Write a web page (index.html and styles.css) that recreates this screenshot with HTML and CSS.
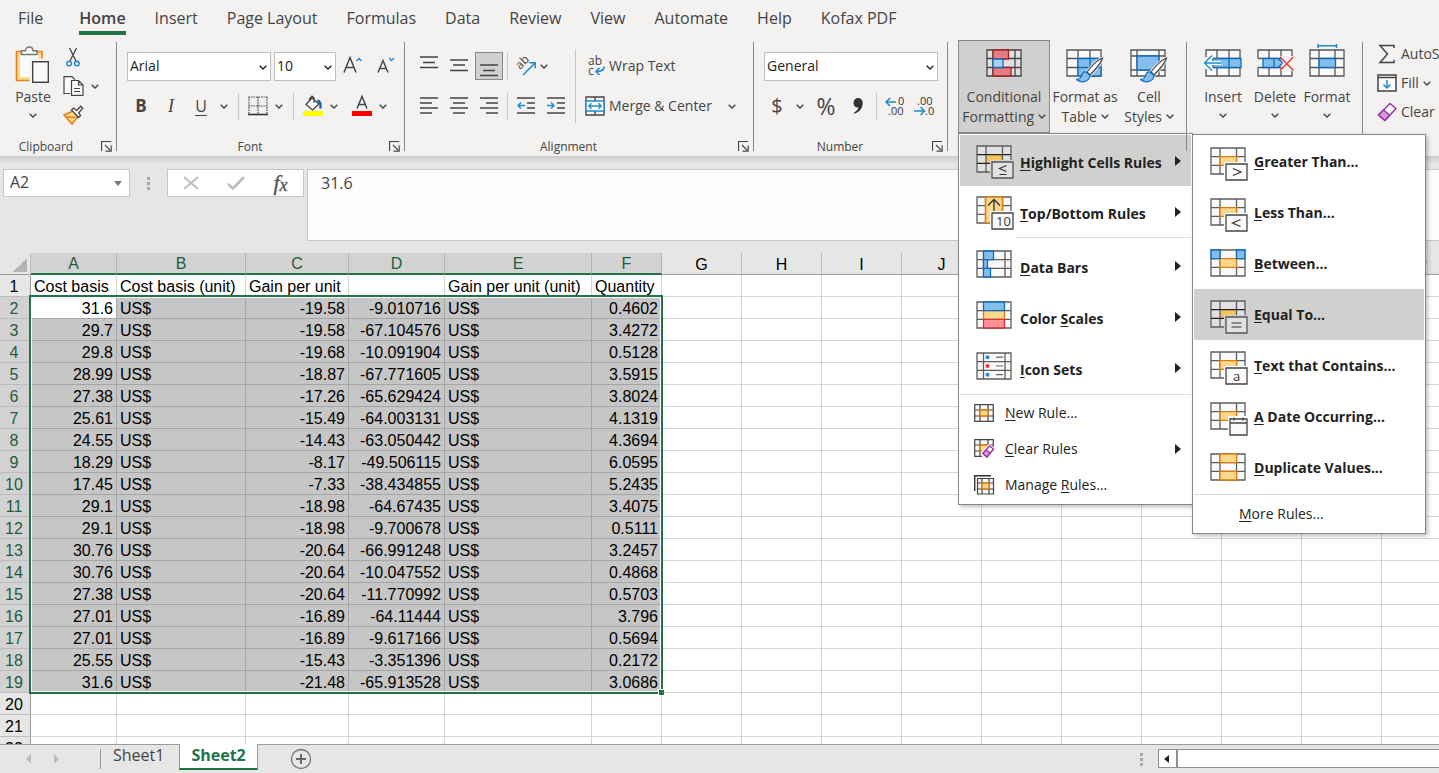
FILE: index.html
```html
<!DOCTYPE html>
<html lang="en">
<head>
<meta charset="utf-8">
<title>Workbook</title>
<link rel="stylesheet" href="styles.css">
</head>
<body>
<svg class="sprite" aria-hidden="true">
  <symbol id="chev" viewBox="0 0 8 5"><path d="M.7.7 4 4 7.3.7" fill="none" stroke="currentColor" stroke-width="1.4"/></symbol>
  <symbol id="launch" viewBox="0 0 11 11"><path d="M.5 10V.5H10M4 4l5 5M10.200 4.500v5.700H4.500" fill="none" stroke="#444" stroke-width="1.2"/></symbol>
  <symbol id="grid" viewBox="0 0 38 34">
    <path d="M1 1h34v26H1z" fill="#fafafa"/>
    <path d="M1 1h34v26H1zM10 1v26M26.500 1v26M1 9.700h34M1 18.300h34" fill="none" stroke="#605e5c" stroke-width="1.300"/>
  </symbol>
  <symbol id="gridmid" viewBox="0 0 38 34">
    <use href="#grid"/><path d="M10 9.700h16.500v8.600H10z" fill="#f9d98c" stroke="#e07b13" stroke-width="1.300"/>
  </symbol>
  <symbol id="griddark" viewBox="0 0 38 34">
    <path d="M1 1h34v26H1z" fill="#e1e1e1"/>
    <path d="M10 9.700h16.500v8.600H10z" fill="#f5c55a"/>
    <path d="M1 1h34v26H1zM10 1v26M26.500 1v26" fill="none" stroke="#605e5c" stroke-width="1.300"/><path d="M1 9.700h34M1 18.300h34" stroke="#222" stroke-width="1.200"/>
  </symbol>
  <symbol id="badge" viewBox="0 0 38 34"><path d="M14 15h24v19H14z" fill="#fff"/><path d="M16 17h21v16H16z" fill="#fafafa" stroke="#444" stroke-width="1.300"/></symbol>
  <symbol id="badgedark" viewBox="0 0 38 34"><path d="M14 15h24v19H14z" fill="#d2d0ce"/><path d="M16 17h21v16H16z" fill="#e1e1e1" stroke="#555" stroke-width="1.300"/></symbol>
  <symbol id="small" viewBox="0 0 20 18"><path d="M.7.7h18.600v16.600H.7zM6 .7v16.600M14 .7v16.600M.7 6h18.600M.7 12h18.600" fill="#fafafa" stroke="#444" stroke-width="1.200"/><path d="M6 6h8v6H6z" fill="#f9d98c" stroke="#e07b13" stroke-width="1.300"/></symbol>
  <symbol id="brush" viewBox="0 0 28 26">
    <path d="M26.500 1C20 4 14 11 11 15l3 3C18 14 25 7 26.500 1z" fill="#fff" stroke="#f3f2f1" stroke-width="3"/>
    <path d="M26.500 1C20 4 14 11 11 15l3 3C18 14 25 7 26.500 1z" fill="#fff" stroke="#444" stroke-width="1.200"/>
    <path d="M10 15c-3-.5-4 1.500-4.500 4-.4 2-2 3-5 3.500C4 26 13 26 14 18.500z" fill="#83beec" stroke="#0f6cbd" stroke-width="1.200"/>
  </symbol>
</svg>

<nav class="tabs">
  <a class="tab file" href="#">File</a><a class="tab on" href="#">Home</a><a class="tab" href="#">Insert</a><a class="tab" href="#">Page Layout</a><a class="tab" href="#">Formulas</a><a class="tab" href="#">Data</a><a class="tab" href="#">Review</a><a class="tab" href="#">View</a><a class="tab" href="#">Automate</a><a class="tab" href="#">Help</a><a class="tab" href="#">Kofax PDF</a>
</nav>

<div class="ribbon">
  <section class="group clipboard">
    <div class="body">
      <button class="big paste">
        <svg width="36" height="38" viewBox="0 0 36 38"><path d="M1.500 5.500h25.500v29H1.500z" fill="#f9d98c" stroke="#e8811a" stroke-width="1.600"/><path d="M5 9h18.500v22H5z" fill="#fafafa"/><path d="M6.500 8.500V4.700h4c0-2 1.500-3.700 3.700-3.700s3.700 1.700 3.700 3.700h4v3.800z" fill="#fafafa" stroke="#777" stroke-width="1.400"/><path d="M16.500 14.500h18v22h-18z" fill="#fafafa" stroke="#f3f2f1" stroke-width="4"/><path d="M17.700 15.700h15.600v20.600H17.700z" fill="#fafafa" stroke="#444" stroke-width="1.400"/></svg>
        <span>Paste</span><svg class="chev"><use href="#chev"/></svg>
      </button>
      <div class="clip-tools">
        <button class="ico" aria-label="Cut"><svg width="14" height="20" viewBox="0 0 14 20"><path d="M3.500 1l6.500 13M10.500 1L4 14" fill="none" stroke="#444" stroke-width="1.300"/><circle cx="3.200" cy="16.500" r="2.300" fill="none" stroke="#1e8bcd" stroke-width="1.500"/><circle cx="10.800" cy="16.500" r="2.300" fill="none" stroke="#1e8bcd" stroke-width="1.500"/></svg></button>
        <div class="row"><button class="ico" aria-label="Copy"><svg width="21" height="20" viewBox="0 0 21 20"><path d="M7 17.500H1V.7h8l3 3" fill="#fafafa" stroke="#444" stroke-width="1.200"/><path d="M8.500 4.500h7l4.500 4.500v10.300H8.500zM15.500 4.500V9H20M11 12.500h6M11 15.500h6" fill="#fafafa" stroke="#444" stroke-width="1.200"/></svg></button><button class="drop" aria-label="Copy options"><svg class="chev"><use href="#chev"/></svg></button></div>
        <button class="ico" aria-label="Format Painter"><svg width="21" height="20" viewBox="0 0 21 20"><path d="M1 10l9-4 5 5.500-6 7.500z" fill="#f9d98c" stroke="#e8811a" stroke-width="1.500"/><path d="M3.500 12l10 .5" stroke="#e8811a" stroke-width="1.300"/><path d="M8.500 5l2-2 3.200 2.500 4-4.300 2 2-4 4.500 1.800 3-2 1.800z" fill="#fff" stroke="#444" stroke-width="1.300"/></svg></button>
      </div>
    </div>
    <div class="foot"><span>Clipboard</span><button class="launcher" aria-label="Clipboard settings"><svg><use href="#launch"/></svg></button></div>
  </section>

  <section class="group font">
    <div class="body col">
      <div class="row one">
        <label class="combo family"><select aria-label="Font"><option>Arial</option></select><svg class="chev"><use href="#chev"/></svg></label>
        <label class="combo size"><select aria-label="Font size"><option>10</option></select><svg class="chev"><use href="#chev"/></svg></label>
        <button class="ico grow" aria-label="Increase font size"><svg width="20" height="20" viewBox="0 0 20 20"><path d="M1 16.500L7 1.500l6 15M3.200 11.500h7.600" fill="none" stroke="#444" stroke-width="1.500"/><path d="M13.500 5L16 2.500 18.500 5" fill="none" stroke="#1e8bcd" stroke-width="1.400"/></svg></button>
        <button class="ico shrink" aria-label="Decrease font size"><svg width="18" height="20" viewBox="0 0 18 20"><path d="M1 16.500L6 4.500l5 12M2.800 12.500h6.400" fill="none" stroke="#444" stroke-width="1.400"/><path d="M12 2l2.500 2.500L17 2" fill="none" stroke="#1e8bcd" stroke-width="1.400"/></svg></button>
      </div>
      <div class="row two">
        <button class="ico w30 b">B</button><button class="ico w30 i">I</button><button class="ico w30 u">U</button><button class="drop" aria-label="Underline options"><svg class="chev"><use href="#chev"/></svg></button>
        <i class="sep m6"></i>
        <button class="ico w26" aria-label="Borders"><svg width="20" height="20" viewBox="0 0 20 20"><path d="M.5 1h19M.5 10h19M1 1v17M10 1v17M19 1v17" fill="none" stroke="#444" stroke-width="1.200" stroke-dasharray="1.500 1"/><path d="M0 18.500h20" stroke="#333" stroke-width="1.600"/></svg></button><button class="drop" aria-label="Border options"><svg class="chev"><use href="#chev"/></svg></button>
        <i class="sep m6"></i>
        <button class="ico w26" aria-label="Fill color"><svg width="20" height="22" viewBox="0 0 20 22"><path d="M9 3l7 6-6.500 6L3 9.500 9 3zM6 4.500l3-3.300 2 1.500v5" fill="#fafafa" stroke="#444" stroke-width="1.300"/><path d="M14.500 5.500c3 1 3.500 4 2.800 8" fill="none" stroke="#1b5fa8" stroke-width="2.400"/><path d="M0 16h20v5H0z" fill="#ff0"/></svg></button><button class="drop" aria-label="Fill options"><svg class="chev"><use href="#chev"/></svg></button>
        <button class="ico w26 ml7" aria-label="Font color"><svg width="20" height="22" viewBox="0 0 20 22"><path d="M5 13.500L10 1.500l5 12M6.700 9.500h6.600" fill="none" stroke="#444" stroke-width="1.500"/><path d="M0 16h20v5H0z" fill="red"/></svg></button><button class="drop" aria-label="Font color options"><svg class="chev"><use href="#chev"/></svg></button>
      </div>
    </div>
    <div class="foot"><span>Font</span><button class="launcher" aria-label="Font settings"><svg><use href="#launch"/></svg></button></div>
  </section>

  <section class="group align">
    <div class="body">
      <div class="col">
        <div class="row one g2">
          <button class="ico w28" aria-label="Top align"><svg class="ln"><path d="M0 1h18M3 6.500h12M0 11.500h18"/></svg></button>
          <button class="ico w28" aria-label="Middle align"><svg class="ln"><path d="M0 4h18M3 9h12M0 14.500h18"/></svg></button>
          <button class="ico w28 pressed" aria-label="Bottom align"><svg class="ln"><path d="M0 9h18M3 14.500h12M0 19.500h18"/></svg></button>
          <i class="sep m2"></i>
          <button class="ico w28" aria-label="Orientation"><svg width="20" height="20" viewBox="0 0 20 20"><text x="0" y="0" class="abtxt" transform="translate(4 14) rotate(-45)">ab</text><path d="M7 19L18.500 7.500M13.500 6.800h5.700v5.500" fill="none" stroke="#1e8bcd" stroke-width="1.500"/></svg></button><button class="drop narrow" aria-label="Orientation options"><svg class="chev"><use href="#chev"/></svg></button>
        </div>
        <div class="row two g2">
          <button class="ico w28" aria-label="Align left"><svg class="ln"><path d="M0 2h18M0 7h12M0 12h18M0 17h12"/></svg></button>
          <button class="ico w28" aria-label="Center"><svg class="ln"><path d="M0 2h18M3 7h12M0 12h18M3 17h12"/></svg></button>
          <button class="ico w28" aria-label="Align right"><svg class="ln"><path d="M0 2h18M6 7h12M0 12h18M6 17h12"/></svg></button>
          <i class="sep m2"></i>
          <button class="ico w28" aria-label="Decrease indent"><svg class="ln"><path d="M0 2h18M10 7h8M10 12h8M0 17h18"/><path class="bl" d="M1 9.500h7M4 6.500l-3 3 3 3"/></svg></button>
          <button class="ico w28" aria-label="Increase indent"><svg class="ln"><path d="M0 2h18M10 7h8M10 12h8M0 17h18"/><path class="bl" d="M0 9.500h7M4 6.500l3 3-3 3"/></svg></button>
        </div>
      </div>
      <i class="sep tall"></i>
      <div class="col wrapcol">
        <div class="row one"><button class="text"><svg width="20" height="20" viewBox="0 0 20 20"><text x="3" y="9" class="abtxt">ab</text><text x="3" y="19" class="abtxt">c</text><path d="M19.200 10.500c0 4-3 5-8 5M14.500 12l-3.500 3.500 3.500 3.500" fill="none" stroke="#1e8bcd" stroke-width="1.700"/></svg>Wrap Text</button></div>
        <div class="row two"><button class="text"><svg width="20" height="20" viewBox="0 0 20 20"><path d="M1 1h18v18H1zM10 1v18" fill="#fafafa" stroke="#444" stroke-width="1.400"/><path d="M1 5h18v10H1z" fill="#fff" stroke="#1e8bcd" stroke-width="1.400"/><path d="M4 10h12M6.500 7.300L3.800 10l2.700 2.700M13.500 7.300l2.700 2.700-2.700 2.700" fill="none" stroke="#1e8bcd" stroke-width="1.400"/></svg>Merge &amp; Center</button><button class="drop ml12" aria-label="Merge options"><svg class="chev"><use href="#chev"/></svg></button></div>
      </div>
    </div>
    <div class="foot"><span>Alignment</span><button class="launcher" aria-label="Alignment settings"><svg><use href="#launch"/></svg></button></div>
  </section>

  <section class="group number">
    <div class="body col">
      <div class="row one"><label class="combo format"><select aria-label="Number format"><option>General</option></select><svg class="chev"><use href="#chev"/></svg></label></div>
      <div class="row two">
        <button class="ico w26 sym">$</button><button class="drop ml2" aria-label="Currency options"><svg class="chev"><use href="#chev"/></svg></button>
        <button class="ico w36 sym pct">%</button>
        <button class="ico w28" aria-label="Comma style"><svg width="12" height="18" viewBox="0 0 12 18"><path d="M6 1c3 0 4.700 2 4.700 5.200C10.700 11 7.500 15 2.500 16.700l-.5-1.200c2.500-1.300 4-3 4.300-5C3.500 11 1.500 8.700 1.500 6 1.500 3 3.400 1 6 1z" fill="#333"/></svg></button>
        <i class="sep m4"></i>
        <button class="ico w28" aria-label="Increase decimal"><svg width="20" height="20" viewBox="0 0 20 20"><text x="13" y="9" class="dec">0</text><text x="3" y="19" class="dec">.00</text><path d="M1 6h10M5 2L1 6l4 4" fill="none" stroke="#1e8bcd" stroke-width="1.500"/></svg></button>
        <button class="ico w30" aria-label="Decrease decimal"><svg width="20" height="20" viewBox="0 0 20 20"><text x="3" y="9" class="dec">.00</text><text x="11" y="19" class="dec">.0</text><path d="M0 15h10M6.500 11l4 4-4 4" fill="none" stroke="#1e8bcd" stroke-width="1.500"/></svg></button>
      </div>
    </div>
    <div class="foot"><span>Number</span><button class="launcher" aria-label="Number settings"><svg><use href="#launch"/></svg></button></div>
  </section>

  <section class="group styles">
    <div class="anchor">
      <button class="big cond">
        <svg width="36" height="38" viewBox="0 0 36 38"><path d="M1 5h34v26H1zM7 5v26M29 5v26M1 13.500h34M1 22.500h34" fill="#e1e1e1" stroke="#444" stroke-width="1.300"/><path d="M7 5h15.500v9H7zM7 22.500h18V31H7z" fill="#e67c80" stroke="#9c2427" stroke-width="1.300"/><path d="M7 14h10v8.500H7z" fill="#a6d1f3" stroke="#0f6cbd" stroke-width="1.300"/></svg>
        <span>Conditional<br>Formatting <svg class="chev"><use href="#chev"/></svg></span>
      </button>

      <ul class="menu main">
        <li class="anchor"><button class="item lg hot"><svg class="g"><use href="#griddark"/><use href="#badgedark"/><path d="M30.500 20.500l-7 3 7 3M23.500 29.500h7" fill="none" stroke="#333" stroke-width="1.200"/></svg><span><u>H</u>ighlight Cells Rules</span><i class="arrow"></i></button>
          <ul class="menu sub">
            <li><button class="item lg"><svg class="g"><use href="#gridmid"/><use href="#badge"/><path d="M23 21.500l8 3.500-8 3.500" fill="none" stroke="#333" stroke-width="1.200"/></svg><span><u>G</u>reater Than...</span></button></li>
            <li><button class="item lg"><svg class="g"><use href="#gridmid"/><use href="#badge"/><path d="M30.500 21.500l-8 3.500 8 3.500" fill="none" stroke="#333" stroke-width="1.200"/></svg><span><u>L</u>ess Than...</span></button></li>
            <li><button class="item lg"><svg class="g"><use href="#gridmid"/><path d="M1 1h9v8.700H1zM26.500 1H35v8.700h-8.500z" fill="#83beec" stroke="#0f6cbd" stroke-width="1.300"/></svg><span><u>B</u>etween...</span></button></li>
            <li><button class="item lg hot"><svg class="g"><use href="#griddark"/><use href="#badgedark"/><path d="M21.500 23h10M21.500 27h10" fill="none" stroke="#333" stroke-width="1.200"/></svg><span><u>E</u>qual To...</span></button></li>
            <li><button class="item lg"><svg class="g"><use href="#gridmid"/><use href="#badge"/><text x="23" y="30" class="badgetxt">a</text></svg><span><u>T</u>ext that Contains...</span></button></li>
            <li><button class="item lg"><svg class="g"><use href="#gridmid"/><path d="M18 14h20v20H18z" fill="#fff"/><path d="M20 17h17v16H20zM20 21h17M24 15.500v3M33 15.500v3" fill="#fafafa" stroke="#444" stroke-width="1.300"/></svg><span><u>A</u> Date Occurring...</span></button></li>
            <li><button class="item lg"><svg class="g"><use href="#grid"/><path d="M10 1h16.500v8.700H10zM10 18.300h16.500V27H10z" fill="#f9d98c" stroke="#e07b13" stroke-width="1.300"/></svg><span><u>D</u>uplicate Values...</span></button></li>
            <li class="rule"></li>
            <li><button class="item more"><span><u>M</u>ore Rules...</span></button></li>
          </ul>
        </li>
        <li><button class="item lg"><svg class="g"><use href="#grid"/><path d="M9.500 1h17v26h-17z" fill="#f9d98c" stroke="#e07b13" stroke-width="1.600"/><path d="M18 18V4M12 9.500L18 3.500l6 6" fill="none" stroke="#333" stroke-width="1.300"/><use href="#badge"/><text x="20" y="30" class="badgetxt">10</text></svg><span><u>T</u>op/Bottom Rules</span><i class="arrow"></i></button></li>
        <li class="rule inset"></li>
        <li><button class="item lg"><svg class="g"><path d="M1 1h34v26H1zM7.500 1v26M29 1v26M1 9.700h34M1 18.300h34" fill="#fafafa" stroke="#605e5c" stroke-width="1.300"/><path d="M7.500 1h10v8.700h-10zM7.500 9.700h4v8.600h-4zM7.500 18.300h7V27h-7z" fill="#83beec" stroke="#0f6cbd" stroke-width="1.300"/></svg><span><u>D</u>ata Bars</span><i class="arrow"></i></button></li>
        <li><button class="item lg"><svg class="g"><path d="M1 1h34v26H1zM1 9.700h34M1 18.300h34" fill="#fafafa" stroke="#605e5c" stroke-width="1.300"/><path d="M7.500 9.700h21v8.600h-21z" fill="#f9d98c" stroke="#e07b13" stroke-width="1.300"/><path d="M7.500 1h21v8.700h-21z" fill="#83beec" stroke="#0f6cbd" stroke-width="1.300"/><path d="M7.500 18.300h21V27h-21z" fill="#ff9199" stroke="#d13438" stroke-width="1.300"/></svg><span>Color <u>S</u>cales</span><i class="arrow"></i></button></li>
        <li><button class="item lg"><svg class="g"><path d="M1 1h34v26H1zM7.500 1v26M29 1v26M1 9.700h34M1 18.300h34" fill="#fafafa" stroke="#605e5c" stroke-width="1.300"/><path d="M20 5.200h7M20 14h7M20 22.700h7" stroke="#666" stroke-width="1.200"/><circle cx="11.500" cy="5.300" r="2" fill="#1e8bcd"/><circle cx="11.500" cy="14" r="2" fill="#e8393d"/><circle cx="11.500" cy="22.700" r="2" fill="#1e8bcd"/></svg><span><u>I</u>con Sets</span><i class="arrow"></i></button></li>
        <li class="rule"></li>
        <li><button class="item sm"><svg class="s"><use href="#small"/></svg><span><u>N</u>ew Rule...</span></button></li>
        <li><button class="item sm"><svg class="s tallsvg"><use href="#small" width="20" height="18"/><path d="M7 13l8-8 6 4v9H8z" fill="#fff"/><path d="M9 14.500L15.500 7l4 3-6.500 8z" fill="#fff" stroke="#9b30a8" stroke-width="1.400"/><path d="M9 14.500l3-3.500 4 3-3 4z" fill="#d9a0de" stroke="#9b30a8" stroke-width="1.300"/></svg><span><u>C</u>lear Rules</span><i class="arrow"></i></button></li>
        <li><button class="item sm"><svg class="s tallsvg"><path d="M.7 16V.7H17" fill="none" stroke="#333" stroke-width="1.400"/><path d="M3.500 3.500h16v15.500h-16zM8 3.500V19M15 3.500V19M3.500 8h16M3.500 14h16" fill="#fafafa" stroke="#444" stroke-width="1.200"/><path d="M8 8h7v6H8z" fill="#f9d98c" stroke="#e07b13" stroke-width="1.300"/></svg><span>Manage <u>R</u>ules...</span></button></li>
      </ul>
    </div>
    <button class="big fmt">
      <svg width="40" height="38" viewBox="0 0 40 38"><path d="M2 5h34v26H2zM13 5v26M25 5v26M2 13.500h34M2 22.500h34" fill="#fafafa" stroke="#555" stroke-width="1.300"/><path d="M13 13.500h23V31H13z" fill="#83beec"/><path d="M36 13.500H13V31h23v-9M25 13.500V31M13 22.500h23" fill="none" stroke="#0f6cbd" stroke-width="1.300"/><use href="#brush" x="11" y="12" width="28" height="26"/></svg>
      <span>Format as<br>Table <svg class="chev"><use href="#chev"/></svg></span>
    </button>
    <button class="big cell">
      <svg width="40" height="38" viewBox="0 0 40 38"><path d="M2 5h34v26H2zM8 5v26M30 5v26M2 11h34M2 25h34" fill="#fafafa" stroke="#555" stroke-width="1.300"/><path d="M8 11h22v14H8z" fill="#83beec" stroke="#0f6cbd" stroke-width="1.300"/><use href="#brush" x="11" y="12" width="28" height="26"/></svg>
      <span>Cell<br>Styles <svg class="chev"><use href="#chev"/></svg></span>
    </button>
  </section>

  <section class="group cells">
    <button class="big"><svg width="40" height="38" viewBox="0 0 40 38"><path d="M3 5h34v26H3zM14 5v26M26 5v26M3 13.500h34M3 22.500h34" fill="#fafafa" stroke="#555" stroke-width="1.300"/><path d="M2 12h10v12H2z" fill="#f3f2f1"/><path d="M10 13.500h28v9H10zM26 13.500v9" fill="#83beec" stroke="#0f6cbd" stroke-width="1.300"/><path d="M18 18H1.500M9 10.500L1.500 18 9 25.500" fill="none" stroke="#fff" stroke-width="4"/><path d="M18 18H1.500M9 10.500L1.500 18 9 25.500" fill="none" stroke="#1e8bcd" stroke-width="1.500"/></svg><span>Insert</span><svg class="chev"><use href="#chev"/></svg></button>
    <button class="big"><svg width="40" height="38" viewBox="0 0 40 38"><path d="M3 5h34v26H3zM14 5v26M26 5v26" fill="#fafafa" stroke="#555" stroke-width="1.300"/><path d="M2 13.500h36v9H2z" fill="#f3f2f1"/><path d="M3 13.500h34M3 22.500h34" stroke="#555" stroke-width="1.300"/><path d="M8 13.500h15l5 4.500-5 4.500H8zM19 13.500v9" fill="#83beec" stroke="#0f6cbd" stroke-width="1.300"/><path d="M25 11h14v15H25l3-8z" fill="#f3f2f1"/><path d="M25 12l13.500 13.500M38.500 12L25 25.500" stroke="#e8393d" stroke-width="1.500"/></svg><span>Delete</span><svg class="chev"><use href="#chev"/></svg></button>
    <button class="big"><svg width="40" height="38" viewBox="0 0 40 38"><path d="M3 5h34v26H3zM12 5v26M28 5v26M3 13.500h34M3 22.500h34" fill="#fafafa" stroke="#555" stroke-width="1.300"/><path d="M12 13.500h16.500v9H12z" fill="#83beec" stroke="#0f6cbd" stroke-width="1.300"/><path d="M11 .7h18.500M11-1v4M29.500-1v4" stroke="#1e8bcd" stroke-width="1.500"/></svg><span>Format</span><svg class="chev"><use href="#chev"/></svg></button>
  </section>

  <section class="group editing">
    <button class="text"><svg width="20" height="20" viewBox="0 0 20 20"><path d="M17 4V1.500H3l7.500 8.500L3 18.500h14V16" fill="none" stroke="#444" stroke-width="1.500"/></svg>AutoSum</button>
    <button class="text"><svg width="20" height="20" viewBox="0 0 20 20"><path d="M1 2h18v16H1zM1 4.500h18" fill="#fafafa" stroke="#444" stroke-width="1.500"/><path d="M10 7v8M6.500 11.500L10 15l3.500-3.500" fill="none" stroke="#1e8bcd" stroke-width="1.500"/></svg>Fill <svg class="chev"><use href="#chev"/></svg></button>
    <button class="text"><svg width="20" height="20" viewBox="0 0 20 20"><path d="M1.500 13L13 1.500l6 5L8 18.500z" fill="#fafafa" stroke="#9b30a8" stroke-width="1.400"/><path d="M1.500 13L6.500 8l6 5L8 18.500z" fill="#d59adb" stroke="#9b30a8" stroke-width="1.400"/></svg>Clear</button>
  </section>
</div>

<div class="formula">
  <label class="namebox"><input value="A2" aria-label="Name box"><i class="caret"></i></label>
  <i class="dots"></i>
  <div class="fxbox">
    <button aria-label="Cancel"><svg width="16" height="14" viewBox="0 0 16 14"><path d="M1 1l14 12M15 1L1 13" stroke="#bdbdbd" stroke-width="1.800"/></svg></button>
    <button aria-label="Enter"><svg width="18" height="14" viewBox="0 0 18 14"><path d="M1 8l5 4.500L17 1" fill="none" stroke="#bdbdbd" stroke-width="2.600"/></svg></button>
    <button class="fx">f<small>x</small></button>
  </div>
  <textarea class="content" aria-label="Formula bar">31.6</textarea>
</div>

<main class="sheet">
  <table>
    <colgroup><col class="c-h"><col class="c-a"><col class="c-b"><col class="c-c"><col class="c-d"><col class="c-e"><col class="c-f"><col span="10" class="c-x"></colgroup>
    <thead><tr id="letters"></tr></thead>
    <tbody id="rows"></tbody>
  </table>
  <div class="selection"><i></i></div>
</main>

<footer class="bottom">
  <button class="nav prev" aria-label="Previous sheet"></button><button class="nav next" aria-label="Next sheet"></button>
  <i class="div"></i>
  <a class="sheettab" href="#">Sheet1</a><a class="sheettab on" href="#">Sheet2</a>
  <button class="add" aria-label="New sheet"><svg width="22" height="22" viewBox="0 0 22 22"><circle cx="11" cy="11" r="9.500" fill="none" stroke="#777" stroke-width="1.300"/><path d="M11 6v10M6 11h10" stroke="#666" stroke-width="2"/></svg></button>
  <i class="dots"></i>
  <div class="hscroll"><button aria-label="Scroll left"></button></div>
</footer>
<script src="sheet.js"></script>
</body>
</html>
```

FILE: sheet.js
```js
const letters = ["A","B","C","D","E","F","G","H","I","J","K","L","M","N","O","P"];
const data = [
  ["31.6", "-19.58", "-9.010716", "0.4602"],
  ["29.7", "-19.58", "-67.104576", "3.4272"],
  ["29.8", "-19.68", "-10.091904", "0.5128"],
  ["28.99", "-18.87", "-67.771605", "3.5915"],
  ["27.38", "-17.26", "-65.629424", "3.8024"],
  ["25.61", "-15.49", "-64.003131", "4.1319"],
  ["24.55", "-14.43", "-63.050442", "4.3694"],
  ["18.29", "-8.17", "-49.506115", "6.0595"],
  ["17.45", "-7.33", "-38.434855", "5.2435"],
  ["29.1", "-18.98", "-64.67435", "3.4075"],
  ["29.1", "-18.98", "-9.700678", "0.5111"],
  ["30.76", "-20.64", "-66.991248", "3.2457"],
  ["30.76", "-20.64", "-10.047552", "0.4868"],
  ["27.38", "-20.64", "-11.770992", "0.5703"],
  ["27.01", "-16.89", "-64.11444", "3.796"],
  ["27.01", "-16.89", "-9.617166", "0.5694"],
  ["25.55", "-15.43", "-3.351396", "0.2172"],
  ["31.6", "-21.48", "-65.913528", "3.0686"]
];
const titles = ["Cost basis", "Cost basis (unit)", "Gain per unit", "", "Gain per unit (unit)", "Quantity"];

function add(row, tag, text, cls) {
  const el = document.createElement(tag);
  el.textContent = text;
  if (cls) el.className = cls;
  row.append(el);
}

const head = document.getElementById("letters");
add(head, "th", "", "corner");
letters.forEach((l, i) => add(head, "th", l, i < 6 ? "picked" : ""));

const body = document.getElementById("rows");
for (let n = 1; n <= 22; n++) {
  const tr = document.createElement("tr");
  const d = data[n - 2];
  add(tr, "th", n, d ? "picked" : "");
  const cells = n === 1 ? titles : d ? [d[0], "US$", d[1], d[2], "US$", d[3]] : [];
  letters.forEach((l, i) => {
    const text = cells[i] || "";
    let cls = "";
    if (d && i < 6) {
      cls = n === 2 && i === 0 ? "active" : "sel";
      if (text !== "US$") cls += " num";
    }
    add(tr, "td", text, cls);
  });
  body.append(tr);
}
```

FILE: styles.css
```css
* { box-sizing: border-box; }
body { margin: 0; height: 100vh; display: flex; flex-direction: column; overflow: hidden; background: #e6e6e6; color: #444; font: 14px/20px "Open Sans", sans-serif; }
button { font: inherit; color: inherit; background: none; border: 0; padding: 0; margin: 0; }
svg { display: block; flex: none; overflow: visible; }
i { font-style: normal; flex: none; }
.sprite { position: absolute; width: 0; height: 0; }
.row { display: flex; align-items: center; }
.col { display: flex; flex-direction: column; }

.tabs { display: flex; gap: 29px; padding-left: 18px; height: 36px; background: #f3f2f1; font-size: 16px; flex: none; }
.tab { color: #444; text-decoration: none; padding-top: 8px; height: 35px; white-space: nowrap; }
.tab.file { margin-right: 7px; }
.tab.on { font-weight: 600; border-bottom: 4px solid #217346; }

.ribbon { display: flex; height: 120px; background: #f3f2f1; flex: none; position: relative; z-index: 2; }
.group { position: relative; display: flex; flex-direction: column; flex: none; }
.group::after { content: ""; position: absolute; right: 0; top: 6px; bottom: 5px; width: 1px; background: #8a8886; }
.group.editing::after { display: none; }
.clipboard { width: 117px; }
.font { width: 288px; }
.align { width: 349px; }
.number { width: 194px; }
.group.styles { width: 239px; flex-direction: row; padding-left: 10px; z-index: 1; }
.cells { width: 176px; flex-direction: row; padding-left: 10px; }
.editing { flex: 1; padding: 8px 0 0 14px; gap: 9px; }
.body { display: flex; height: 100px; }
.body.col { flex-direction: column; }
.foot { display: flex; align-items: center; height: 20px; padding: 1px 5px 0 0; font-size: 12px; }
.foot span { flex: 1; text-align: center; }
.clipboard .foot span { padding-right: 9px; }
.font .foot span, .align .foot span, .number .foot span { padding-right: 6px; }
.launcher svg { width: 11px; height: 11px; }
.chev { width: 8px; height: 5px; }
.drop { width: 16px; height: 26px; display: flex; align-items: center; justify-content: center; }
.drop.narrow { width: 12px; margin-left: -4px; }
.ico { display: flex; align-items: center; justify-content: center; height: 28px; }
.w26 { width: 26px; }
.w28 { width: 28px; }
.w30 { width: 30px; }
.w36 { width: 36px; }
.g2 { gap: 2px; }
.ml2 { margin-left: 2px; }
.ml7 { margin-left: 7px; }
.ml12 { margin-left: 12px; }
.sep { width: 1px; height: 27px; background: #c8c6c4; }
.m2 { margin: 0 2px; }
.m4 { margin: 0 4px; }
.m6 { margin: 0 6px; }
.sep.tall { height: 74px; margin: 13px 9px 0 5px; }
.one { height: 28px; margin-top: 16px; }
.two { height: 28px; margin-top: 12px; }
.pressed { background: #d2d0ce; border: 1px solid #8a8886; }
.b { font-size: 17px; font-weight: 700; }
.i { font: italic 18px "Liberation Serif", serif; }
.u { font-size: 16px; text-decoration: underline; text-underline-offset: 3px; }
.sym { font-size: 20px; }
.pct { font-size: 23px; }
.ln { width: 18px; height: 21px; fill: none; stroke: #444; stroke-width: 1.4px; }
.ln .bl { stroke: #1e8bcd; }
.abtxt { font-size: 12px; fill: #444; }
.dec { font-size: 11px; fill: #333; }
.badgetxt { font-size: 13px; fill: #333; font-weight: 400; }

.big { display: flex; flex-direction: column; align-items: center; text-align: center; padding-top: 9px; flex: none; }
.big span { margin-top: 4px; white-space: nowrap; }
.big > .chev { margin-top: 6px; }
.big span .chev { display: inline-block; vertical-align: 3px; }
.paste { margin-left: 14px; width: 38px; padding-top: 10px; }
.paste span { margin-top: 3px; }
.clip-tools { display: flex; flex-direction: column; gap: 1px; padding-top: 7px; margin-left: 11px; align-items: flex-start; }
.clip-tools > .ico { min-width: 20px; }
.clip-tools .drop { width: 18px; margin-left: 2px; }
.font .one { padding-left: 10px; gap: 3px; }
.font .grow { width: 26px; margin-left: 1px; }
.font .shrink { width: 26px; margin-left: 4px; }
.font .two { padding-left: 9px; }
.align .body { padding-left: 10px; }
.text { display: flex; align-items: center; white-space: nowrap; gap: 4px; }
.number .one { padding-left: 10px; }
.number .two { padding-left: 10px; }
.combo { position: relative; display: block; height: 29px; }
.combo select { appearance: none; width: 100%; height: 100%; border: 1px solid #bfbfbf; border-radius: 0; background: #fff; font: inherit; color: #222; padding: 0 2px; }
.combo .chev { position: absolute; right: 4px; top: 13px; color: #222; }
.family { width: 144px; }
.size { width: 62px; }
.format { width: 174px; }
.anchor { position: relative; }
.cond { width: 92px; height: 93px; margin-top: 4px; padding-top: 4px; border: 1px solid #8a8886; background: #d2d0ce; }
.fmt { width: 70px; }
.cell { width: 58px; }
.cells .big { width: 52px; }

.menu { list-style: none; margin: 0; padding: 1px; position: absolute; background: #fff; border: 1px solid #8a8886; box-shadow: 2px 2px 4px rgba(0, 0, 0, .25); color: #222; }
.main { left: 0; top: 97px; width: 235px; }
.sub { left: 232px; top: -1px; width: 234px; }
.item { display: flex; width: 100%; align-items: center; text-align: left; height: 36px; white-space: nowrap; }
.item span { flex: 1; }
.item u { text-underline-offset: 2px; }
.lg { height: 51px; padding: 0 10px 0 16px; font-weight: 700; }
.g { width: 38px; height: 34px; margin-right: 6px; }
.sub .lg { padding-top: 1px; }
.main > li > .lg > span { padding-top: 5px; }
.main > li > .lg > .g { margin-top: 2px; }
.sub .lg .g { margin-top: 3px; }
.hot { background: #d2d0ce; }
.arrow { border-left: 6px solid #222; border-top: 5px solid transparent; border-bottom: 5px solid transparent; }
.rule { height: 1px; background: #dcdcdc; margin: 1px 0 0; }
.rule.inset { margin: 0 0 2px 55px; }
.sm { padding: 0 10px 0 14px; }
.s { width: 20px; height: 18px; margin-right: 11px; }
.tallsvg { height: 20px; }
.more { padding-left: 45px; height: 37px; }

.formula { display: flex; align-items: flex-start; padding: 13px 0 12px 3px; height: 97px; flex: none; background: linear-gradient(#cdcdcd, #e6e6e6 8px); color: #444; }
.namebox { position: relative; width: 127px; height: 28px; }
.namebox input { width: 100%; height: 100%; border: 1px solid #c6c6c6; background: #fff; font: 16px/20px "Open Sans", sans-serif; color: #444; padding: 0 6px 2px; }
.caret { position: absolute; right: 8px; top: 12px; border-top: 5px solid #777; border-left: 4px solid transparent; border-right: 4px solid transparent; }
.dots { width: 3px; height: 13px; background: repeating-linear-gradient(#a6a6a6 0 3px, transparent 3px 5px); }
.formula .dots { margin: 8px 17px 0; }
.fxbox { display: flex; width: 137px; height: 28px; border: 1px solid #c6c6c6; background: #fff; }
.fxbox button { flex: 1; display: flex; align-items: center; justify-content: center; }
.fx { font: italic 22px/24px "Liberation Serif", serif; color: #555; -webkit-text-stroke: 0.4px #555; }
.fx small { font-size: 18px; padding-top: 3px; }
.content { flex: 1; margin-left: 3px; height: 72px; border: 1px solid #c6c6c6; border-right: 0; resize: none; background: #fdfdfd; color: #444; font: 16px/20px "Open Sans", sans-serif; padding: 3px 13px; }

.sheet { flex: 1; position: relative; overflow: hidden; background: #fff; min-height: 0; }
table { table-layout: fixed; border-collapse: separate; border-spacing: 0; width: 1461px; font: 16px/19px "Liberation Sans", sans-serif; color: #000; }
.c-h { width: 31px; }
.c-a { width: 86px; }
.c-b { width: 129px; }
.c-c { width: 103px; }
.c-d { width: 96px; }
.c-e { width: 147px; }
.c-f { width: 70px; }
.c-x { width: 80px; }
th, td { height: 22px; padding: 2px 3px 0; border-right: 1px solid #d4d4d4; border-bottom: 1px solid #d4d4d4; overflow: hidden; white-space: nowrap; text-align: left; }
th { background: #e6e6e6; font-weight: 400; text-align: center; border-color: #bdbdbd; }
thead th { border-bottom-color: #9b9b9b; }
thead th.picked { background: #d2d2d2; color: #1e5c40; padding-top: 1px; border-bottom: 2px solid #217346; border-right-color: #b0b0b0; }
tbody th { border-right-color: #9b9b9b; padding: 2px 2px 0 0; }
tbody th.picked { background: #d2d2d2; color: #1e5c40; }
.corner { background: linear-gradient(135deg, #e6e6e6 50%, #b4b4b4 50%) 13px 5px / 14px 14px no-repeat #e6e6e6; }
.sel { background: #c6c6c6; border-color: #a6a6a6; }
.active { background: #fff; border-color: #a6a6a6; }
.num { text-align: right; }
.selection { position: absolute; left: 29px; top: 42px; width: 634px; height: 399px; border: 2px solid #217346; box-shadow: inset 0 0 0 1px #fff; pointer-events: none; }
.selection i { position: absolute; right: -3px; bottom: -3px; width: 6px; height: 6px; background: #217346; border: solid #fff; border-width: 1px 0 0 1px; }

.bottom { display: flex; height: 29px; flex: none; border-top: 1px solid #9b9b9b; background: #e6e6e6; font-size: 16px; }
.nav { width: 6px; height: 10px; margin-top: 9px; border-top: 5px solid transparent; border-bottom: 5px solid transparent; }
.prev { margin-left: 25px; border-right: 5px solid #bcbcbc; }
.next { margin-left: 23px; border-left: 5px solid #bcbcbc; }
.div { width: 1px; height: 20px; margin: 4px 0 0 40px; background: #9b9b9b; }
.sheettab { color: #444; text-decoration: none; padding: 0 12px; height: 26px; }
.sheettab.on { background: #fff; color: #217346; font-weight: 700; margin: -1px 0 0 3px; padding: 1px 11px 0; border: 1px solid #9b9b9b; border-top: 0; border-bottom: 2px solid #217346; }
.add { margin: 3px auto 0 32px; height: 22px; }
.bottom .dots { margin: 8px 15px 0 0; }
.hscroll { width: 281px; height: 19px; margin-top: 4px; border: 1px solid #8f8f8f; border-right: 0; background: #fff; }
.hscroll button { display: flex; align-items: center; width: 19px; height: 17px; padding-left: 5px; border-right: 2px solid #8f8f8f; }
.hscroll button::before { content: ""; border-right: 5px solid #222; border-top: 4px solid transparent; border-bottom: 4px solid transparent; }
```
